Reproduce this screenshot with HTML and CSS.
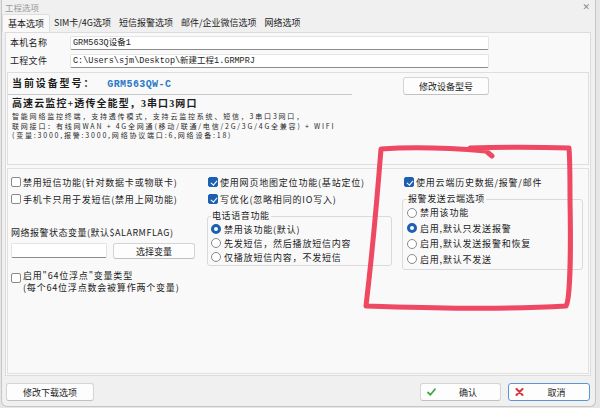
FILE: index.html
```html
<!DOCTYPE html>
<html lang="zh-CN">
<head>
  <meta charset="UTF-8">
  <title>工程选项</title>
  <link rel="stylesheet" href="styles.css">
</head>
<body>
  <div class="window">
    <!-- Title bar -->
    <div class="titlebar">
      <span>工程选项</span>
      <span class="close">✕</span>
    </div>

    <!-- Tabs -->
    <div class="tabs">
      <span class="tab active">基本选项</span>
      <span class="tab">SIM卡/4G选项</span>
      <span class="tab">短信报警选项</span>
      <span class="tab">邮件/企业微信选项</span>
      <span class="tab">网络选项</span>
    </div>

    <div class="page">
      <div class="field-row">
        <label>本机名称</label>
        <div class="input mono">GRM563Q设备1</div>
      </div>
      <div class="field-row">
        <label>工程文件</label>
        <div class="input mono">C:\Users\sjm\Desktop\新建工程1.GRMPRJ</div>
      </div>

      <!-- Device model -->
      <div class="device">
        <div class="device-head">
          <div class="model"><b>当前设备型号：</b><span class="model-no">GRM563QW-C</span></div>
          <button class="btn model-btn">修改设备型号</button>
        </div>
        <div class="device-title">高速云监控+透传全能型，3串口3网口</div>
        <div class="device-desc">
          智能网络监控终端，支持透传模式，支持云监控系统、短信，3串口3网口，<br>
          联网接口：有线网WAN + 4G全网通(移动/联通/电信/2G/3G/4G全兼容) + WIFI<br>
          (变量:3000,报警:3000,网络协议端口:6,网络设备:18)
        </div>
      </div>

      <!-- Options -->
      <div class="options">
        <div class="col">
          <div class="check"><span class="cb"></span>禁用短信功能(针对数据卡或物联卡)</div>
          <div class="check"><span class="cb"></span>手机卡只用于发短信(禁用上网功能)</div>
          <div class="var-label">网络报警状态变量(默认$ALARMFLAG)</div>
          <div class="var-row">
            <div class="input var-input"></div>
            <button class="btn var-btn">选择变量</button>
          </div>
          <div class="check two-line">
            <span class="cb"></span>
            <span>启用"64位浮点"变量类型<br>(每个64位浮点数会被算作两个变量)</span>
          </div>
        </div>

        <div class="col">
          <div class="check"><span class="cb on"></span>使用网页地图定位功能(基站定位)</div>
          <div class="check"><span class="cb on"></span>写优化(忽略相同的IO写入)</div>
          <fieldset class="group voice">
            <legend>电话语音功能</legend>
            <div class="radio-row"><span class="rb on"></span>禁用该功能(默认)</div>
            <div class="radio-row"><span class="rb"></span>先发短信，然后播放短信内容</div>
            <div class="radio-row"><span class="rb"></span>仅播放短信内容，不发短信</div>
          </fieldset>
        </div>

        <div class="col">
          <div class="check cloud"><span class="cb on"></span>使用云端历史数据/报警/邮件</div>
          <fieldset class="group cloud-group">
            <legend>报警发送云端选项</legend>
            <div class="radio-row"><span class="rb"></span>禁用该功能</div>
            <div class="radio-row"><span class="rb on"></span>启用,默认只发送报警</div>
            <div class="radio-row"><span class="rb"></span>启用,默认发送报警和恢复</div>
            <div class="radio-row"><span class="rb"></span>启用,默认不发送</div>
          </fieldset>
        </div>
      </div>
    </div>

    <!-- Footer buttons -->
    <div class="footer">
      <button class="btn download-btn">修改下载选项</button>
      <div class="footer-right">
        <button class="btn icon-btn">
          <svg width="9" height="8" viewBox="0 0 9 8"><path d="M1 4.5 L3.4 6.8 L8 1.2" fill="none" stroke="#4aa547" stroke-width="1.8" stroke-linecap="round" stroke-linejoin="round"/></svg>
          <span>确认</span>
        </button>
        <button class="btn icon-btn cancel">
          <svg width="9" height="8" viewBox="0 0 9 8"><path d="M1.5 1 L7.5 7 M7.5 1 L1.5 7" stroke="#d8333c" stroke-width="2" stroke-linecap="round"/></svg>
          <span>取消</span>
        </button>
      </div>
    </div>
  </div>

  <!-- hand-drawn marker loop -->
  <svg class="marker" width="600" height="408" viewBox="0 0 600 408">
    <path d="M492 156 L486 151 C450 148 410 147 381 149 C377 200 372 255 366 306 C430 308 500 310 566 306 C570 300 571 250 570 200 C570 175 570 160 569 148 C540 147 500 147 470 148"
          fill="none" stroke="#ef4862" stroke-width="5" stroke-linecap="round" stroke-linejoin="round"/>
  </svg>
</body>
</html>
```

FILE: styles.css
```css
* {
  box-sizing: border-box;
}
body {
  margin: 0;
  width: 600px;
  height: 408px;
  overflow: hidden;
  position: relative;
  background: #e6e6e6;
  font-family: "Noto Sans CJK SC", sans-serif;
  font-size: 9px;
  color: #1c1c1c;
}
.window {
  width: 595px;
  height: 407px;
  margin-left: 1px;
  background: #f0f0f0;
  border: 1px solid #c6c6c6;
  border-top: none;
  border-radius: 0 0 6px 6px;
  display: flex;
  flex-direction: column;
}
/* Title bar */
.titlebar {
  height: 14px;
  display: flex;
  align-items: center;
  justify-content: space-between;
  padding: 0 5px 0 3px;
  color: #9a9a9a;
  font-size: 8.5px;
}
.close {
  color: #8a8a8a;
  font-size: 9px;
  font-family: "DejaVu Sans", sans-serif;
}
/* Tabs */
.tabs {
  height: 18px;
  display: flex;
  align-items: flex-end;
}
.tab {
  padding: 0 4px;
  line-height: 17px;
  height: 18px;
}
.tab.active {
  padding: 0 5px;
  background: #f9f9f9;
  border: 1px solid #dedede;
  border-bottom: none;
  border-radius: 2px 2px 0 0;
}
/* Tab page */
.page {
  flex: 1;
  margin: 0 4px 0 3px;
  background: #f9f9f9;
  border: 1px solid #dcdcdc;
  padding: 3px 0 0 0;
  display: flex;
  flex-direction: column;
}
.field-row {
  display: flex;
  height: 14px;
  margin-bottom: 4px;
}
.field-row label {
  width: 64px;
  padding-left: 4px;
  line-height: 14px;
  letter-spacing: 0.3px;
}
.input {
  background: #fff;
  border: 1px solid #e4e4e4;
  border-bottom-color: #8c8c8c;
  border-radius: 2px;
}
.field-row .input {
  width: 419px;
  padding-left: 2px;
  line-height: 12px;
}
.mono {
  font-family: "Liberation Mono", "Noto Sans CJK SC", monospace;
  font-size: 8.5px;
}
/* Device model group */
.device {
  height: 93px;
  margin: 0 1px;
  border: 1px solid #dedede;
}
.device-head {
  display: flex;
  height: 22px;
}
.model {
  width: 344px;
  height: 22px;
  padding-left: 4px;
  line-height: 21px;
  border-bottom: 1px solid #c9c9c9;
}
.model b {
  font-family: "Liberation Serif", "Noto Sans CJK SC", serif;
  font-size: 10px;
  letter-spacing: 1.9px;
}
.model-no {
  margin-left: 12px;
  font-family: "Liberation Mono", monospace;
  font-weight: bold;
  font-size: 10px;
  letter-spacing: 0.4px;
  color: #2b7ac6;
}
.btn {
  font-family: "Noto Sans CJK SC", sans-serif;
  font-size: 9px;
  color: #1c1c1c;
  background: #fdfdfd;
  border: 1px solid #d4d4d4;
  border-bottom-color: #c0c0c0;
  border-radius: 3px;
  padding: 0;
  height: 18px;
}
.model-btn {
  margin: 4px 0 0 51px;
  width: 86px;
}
.device-title {
  margin-top: 2px;
  padding-left: 4px;
  line-height: 14px;
  font-family: "Liberation Serif", "Noto Sans CJK SC", serif;
  font-weight: bold;
  font-size: 10px;
  letter-spacing: 1.1px;
}
.device-desc {
  margin-top: 1px;
  padding-left: 4px;
  font-size: 7px;
  line-height: 9.5px;
  letter-spacing: 1.8px;
  color: #2a2a2a;
}
/* Options panel */
.options {
  flex: 1;
  margin: 3px 1px 1px;
  border: 1px solid #e0e0e0;
  padding: 6px 0 0 3px;
  display: grid;
  grid-template-columns: 197px 194px 1fr;
  align-items: start;
}
.col {
  display: flex;
  flex-direction: column;
}
.check {
  display: flex;
  align-items: center;
  gap: 2px;
  height: 14px;
  margin-bottom: 3px;
  letter-spacing: 0.8px;
  white-space: nowrap;
}
.cb {
  width: 10px;
  height: 10px;
  flex: none;
  border: 1px solid #8a8a8a;
  border-radius: 2px;
  background: #fff;
  position: relative;
}
.cb.on {
  background: #1d5fb0;
  border-color: #1d5fb0;
}
.cb.on::after {
  content: "";
  position: absolute;
  left: 2.5px;
  top: 0.5px;
  width: 2.5px;
  height: 5px;
  border: solid #fff;
  border-width: 0 1.2px 1.2px 0;
  transform: rotate(40deg);
}
.var-label {
  margin-top: 17px;
  line-height: 14px;
  letter-spacing: 0.5px;
}
.var-row {
  display: flex;
  gap: 6px;
  margin-top: 3px;
  height: 16px;
}
.var-input {
  width: 96px;
  height: 15px;
}
.var-btn {
  width: 82px;
  height: 16px;
}
.check.two-line {
  align-items: flex-start;
  height: auto;
  margin-top: 11px;
  line-height: 12px;
}
.check.two-line .cb {
  margin-top: 3px;
}
/* Group boxes */
.group {
  margin: 0;
  border: 1px solid #dadada;
  border-radius: 3px;
  padding: 0 3px 1px;
}
.group legend {
  padding: 0 1px;
  line-height: 12px;
  letter-spacing: 0.6px;
}
.voice {
  margin: 1px 10px 0 -1px;
}
.radio-row {
  display: flex;
  align-items: center;
  gap: 3px;
  height: 14px;
  letter-spacing: 0.8px;
  white-space: nowrap;
}
.rb {
  width: 10px;
  height: 10px;
  flex: none;
  border: 1px solid #8a8a8a;
  border-radius: 50%;
  background: #fff;
}
.rb.on {
  border: 3px solid #1d5fb0;
  background: #fff;
}
.check.cloud {
  margin-left: 2px;
}
.cloud-group {
  margin: 1px 5px 0 0;
  padding: 0 4px 2px;
}
.cloud-group .radio-row {
  height: 15.5px;
}
/* Footer */
.footer {
  height: 30px;
  padding: 7px 5px 0 4px;
  display: flex;
  justify-content: space-between;
  align-items: flex-start;
}
.download-btn {
  width: 88px;
}
.footer-right {
  display: flex;
  gap: 7px;
}
.icon-btn {
  width: 81px;
  display: flex;
  align-items: center;
  padding-left: 6px;
}
.icon-btn span {
  flex: 1;
  text-align: center;
}
.icon-btn.cancel {
  width: 82px;
  border-color: #5a95d8;
}
.marker {
  position: absolute;
  top: 0;
  left: 0;
  pointer-events: none;
}
```
